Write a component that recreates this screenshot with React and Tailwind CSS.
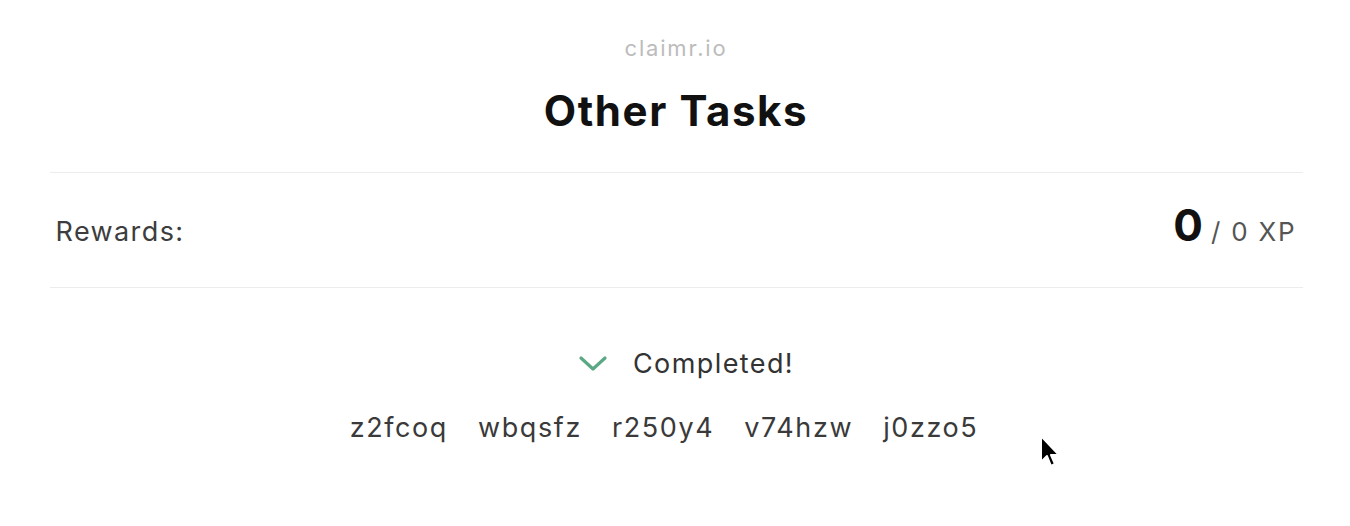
import React from "react";

const codes = ["z2fcoq", "wbqsfz", "r250y4", "v74hzw", "j0zzo5"];

const App = () => {
  return (
    <div
      className="relative min-h-screen w-full overflow-hidden bg-white"
      style={{ fontFamily: "Inter, 'Liberation Sans', sans-serif" }}
    >
      <div className="mx-auto w-[1255px] pl-[2px]">
        {/* Header */}
        <header className="flex flex-col items-center pt-[34px] pb-[37px]">
          <p className="text-[22px] leading-[28px] tracking-[1.8px] text-[#bcbcbc]">claimr.io</p>
          <h1 className="mt-[25px] text-[42px] font-bold leading-[48px] tracking-[1.6px] text-[#111]">
            Other Tasks
          </h1>
        </header>

        {/* Rewards */}
        <div className="flex h-[116px] items-center justify-between border-y border-[#ececec] pl-[6px] pr-[6px] pt-[5px]">
          <span className="text-[27px] tracking-[1.4px] text-[#3d3d3d]">Rewards:</span>
          <span className="flex items-baseline gap-[8px] pb-[11px]">
            <span className="text-[44px] font-bold leading-none text-[#111]">0</span>
            <span className="text-[26px] tracking-[1.8px] text-[#555]">/ 0 XP</span>
          </span>
        </div>

        {/* Completed */}
        <div className="flex flex-col items-center pt-[58px]">
          <div className="flex items-center gap-[25px] pl-[20px]">
            <svg width="30" height="18" viewBox="0 0 30 18" fill="none">
              <path d="M3 3 L15 14 L27 3" stroke="#5aa884" strokeWidth="3.2" strokeLinecap="round" strokeLinejoin="round" />
            </svg>
            <span className="text-[27px] leading-[36px] tracking-[1.4px] text-[#333]">Completed!</span>
          </div>
          <div className="mt-[28px] flex gap-[30px] pr-[24px]">
            {codes.map((c) => (
              <span key={c} className="text-[27px] leading-[36px] tracking-[1.6px] text-[#3a3a3a]">
                {c}
              </span>
            ))}
          </div>
        </div>
      </div>

      {/* Mouse cursor */}
      <svg className="absolute left-[1038px] top-[434px]" width="26" height="36" viewBox="0 0 26 36">
        <path d="M3 2 L3 28 L9 22 L13 32 L17 30 L13 21 L21 21 Z" fill="#000" stroke="#fff" strokeWidth="2" strokeLinejoin="round" />
      </svg>
    </div>
  );
};

export default App;
